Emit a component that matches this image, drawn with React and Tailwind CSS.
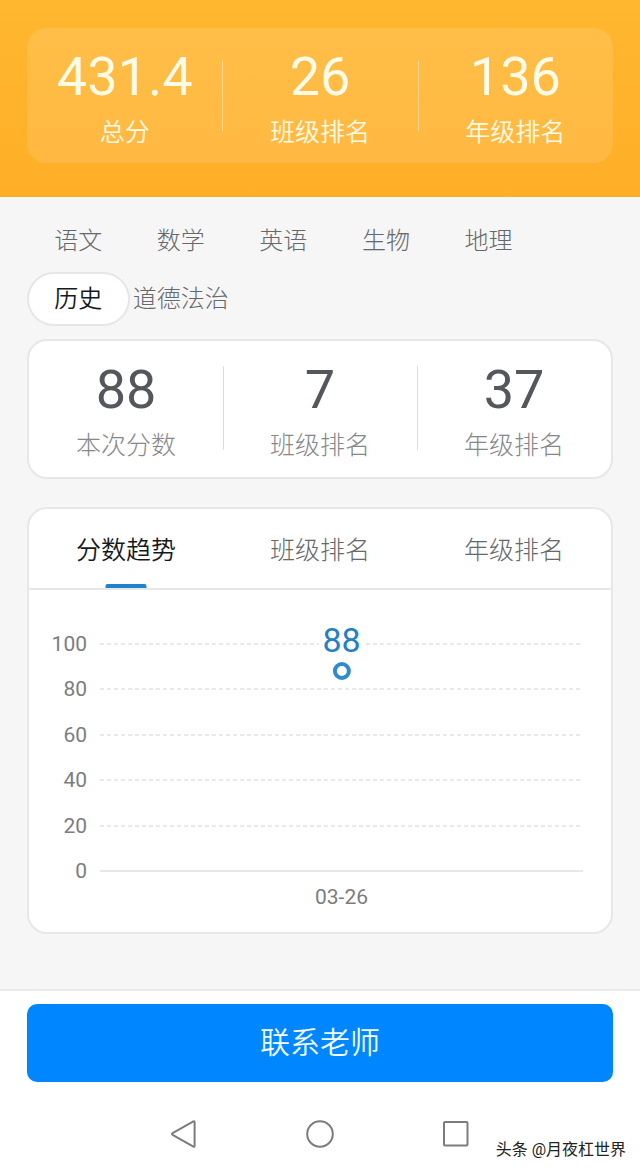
import { useState } from "react";
import clsx from "clsx";

const totals = [
  { label: "总分", value: "431.4" },
  { label: "班级排名", value: "26" },
  { label: "年级排名", value: "136" },
];

const subjects = ["语文", "数学", "英语", "生物", "地理", "历史", "道德法治"];

const subjectStats = [
  { label: "本次分数", value: "88" },
  { label: "班级排名", value: "7" },
  { label: "年级排名", value: "37" },
];

const trendTabs = ["分数趋势", "班级排名", "年级排名"];

const ticks = [100, 80, 60, 40, 20, 0];
const point = { date: "03-26", score: 88 };

const SummaryPanel = () => (
  <header className="bg-linear-to-b from-[#ffb730] to-[#ffae27] px-[27px] pt-7 pb-[34px]">
    <dl className="grid grid-cols-3 rounded-[20px] bg-white/12 pt-[17px] pb-3 text-[#fffbe6]">
      {totals.map((item, i) => (
        <div key={item.label} className="relative flex flex-col-reverse items-center">
          <dt className="pt-1.5 text-[25px] leading-9 font-[350]">{item.label}</dt>
          <dd className="text-[54px] leading-16">{item.value}</dd>
          {i > 0 && <span className="absolute top-4 bottom-5 left-0 w-px bg-white/40" />}
        </div>
      ))}
    </dl>
  </header>
);

const SubjectPicker = ({ value, onChange }) => (
  <nav className="grid w-7/8 grid-cols-5 gap-y-1">
    {subjects.map((name) => (
      <button
        key={name}
        type="button"
        aria-pressed={value === name}
        onClick={() => onChange(name)}
        className={clsx(
          "h-[54px] rounded-full border-2 text-[24px] leading-8 whitespace-nowrap",
          value === name
            ? "border-[#e6e6e6] bg-white font-[350] text-[#16191c]"
            : "border-transparent font-light text-[#66696b]"
        )}
      >
        {name}
      </button>
    ))}
  </nav>
);

const SubjectCard = () => (
  <dl className="mt-[13px] grid grid-cols-3 rounded-[20px] border-2 border-[#e6e7e8] bg-white pt-[17px] pb-[13px]">
    {subjectStats.map((item, i) => (
      <div key={item.label} className="relative flex flex-col-reverse items-center">
        <dt className="pt-1.5 text-[25px] leading-9 font-light text-[#85888a]">{item.label}</dt>
        <dd className="text-[54px] leading-16 text-[#54585c]">{item.value}</dd>
        {i > 0 && <span className="absolute top-2 bottom-[14px] left-0 w-px bg-[#dcdcdc]" />}
      </div>
    ))}
  </dl>
);

const TrendChart = () => (
  <div className="pt-[43px] pr-7 pb-6 pl-5">
    <div className="relative flex h-[249px] flex-col justify-between">
      {ticks.map((tick) => (
        <div key={tick} className="flex h-[22px] items-center gap-[13px]">
          <span className="w-[38px] text-right text-[21px] leading-[22px] text-[#7b7d7f]">
            {tick}
          </span>
          <span
            className={clsx(
              "h-[2px] flex-1",
              tick === 0
                ? "bg-[#e8e8e8]"
                : "bg-[repeating-linear-gradient(90deg,#e9e9e9_0_4px,transparent_4px_7px)]"
            )}
          />
        </div>
      ))}

      {/* Plot area, from the 100 line down to the 0 line */}
      <div className="absolute top-[11px] right-0 bottom-[11px] left-[51px]">
        <div
          className="absolute left-1/2 flex -translate-x-1/2 translate-y-[9px] flex-col items-center"
          style={{ bottom: `${point.score}%` }}
        >
          <span className="bg-white px-1 pb-0.5 text-[34px] leading-10 text-[#2380c3]">
            {point.score}
          </span>
          <span className="size-[18px] rounded-full border-4 border-[#2e8ccd] bg-white" />
        </div>
      </div>
    </div>
    <p className="mt-1 pl-[51px] text-center text-[21px] leading-[22px] text-[#7b7d7f]">
      {point.date}
    </p>
  </div>
);

const TrendCard = () => {
  const [tab, setTab] = useState(trendTabs[0]);

  return (
    <section className="mt-7 rounded-[20px] border-2 border-[#e6e7e8] bg-white">
      <div role="tablist" className="grid grid-cols-3 border-b-2 border-[#e6e7e8]">
        {trendTabs.map((name) => (
          <button
            key={name}
            type="button"
            role="tab"
            aria-selected={tab === name}
            onClick={() => setTab(name)}
            className={clsx(
              "relative h-[79px] pt-1 text-[25px] leading-10",
              tab === name ? "font-[350] text-[#16191c]" : "font-light text-[#66696b]"
            )}
          >
            {name}
            {tab === name && (
              <span className="absolute bottom-0 left-1/2 h-1 w-[41px] -translate-x-1/2 rounded-t-xs bg-[#2182cc]" />
            )}
          </button>
        ))}
      </div>
      <TrendChart />
    </section>
  );
};

const SystemNav = () => (
  <div className="flex h-[104px] items-center justify-center gap-[108px] text-[#7c7c7c]">
    <button type="button" aria-label="返回">
      <svg width="28" height="28" viewBox="0 0 28 28" fill="none" stroke="currentColor" strokeWidth="2" strokeLinejoin="round">
        <path d="M2.6 13.2 23.4 1.4q1.2-.6 1.2.8v23.6q0 1.4-1.2.8L2.6 14.8q-1.2-.8 0-1.6Z" />
      </svg>
    </button>
    <button type="button" aria-label="主页">
      <svg width="28" height="28" viewBox="0 0 28 28" fill="none" stroke="currentColor" strokeWidth="2">
        <circle cx="14" cy="14" r="12.8" />
      </svg>
    </button>
    <button type="button" aria-label="最近任务">
      <svg width="28" height="28" viewBox="0 0 28 28" fill="none" stroke="currentColor" strokeWidth="2">
        <rect x="2" y="2" width="23.5" height="23.5" rx="1" />
      </svg>
    </button>
  </div>
);

export default function App() {
  const [subject, setSubject] = useState("历史");

  return (
    <div className="relative min-h-screen bg-white font-[Roboto,'Noto_Sans_CJK_SC',sans-serif]">
      <SummaryPanel />
      <main className="bg-[#f6f6f6] px-[27px] pt-[17px] pb-[55px]">
        <SubjectPicker value={subject} onChange={setSubject} />
        <SubjectCard />
        <TrendCard />
      </main>

      <footer className="border-t-2 border-[#ececec] px-[27px] pt-[13px]">
        <button
          type="button"
          className="h-[78px] w-full rounded-[10px] bg-[#0086ff] text-[30px] leading-10 font-[350] text-[#f0fcff]"
        >
          联系老师
        </button>
        <SystemNav />
      </footer>

      <p className="absolute right-[14px] bottom-6 text-[16px] leading-6 text-[#222] text-shadow-[1px_1px_0_#fff]">
        头条 @月夜杠世界
      </p>
    </div>
  );
}
